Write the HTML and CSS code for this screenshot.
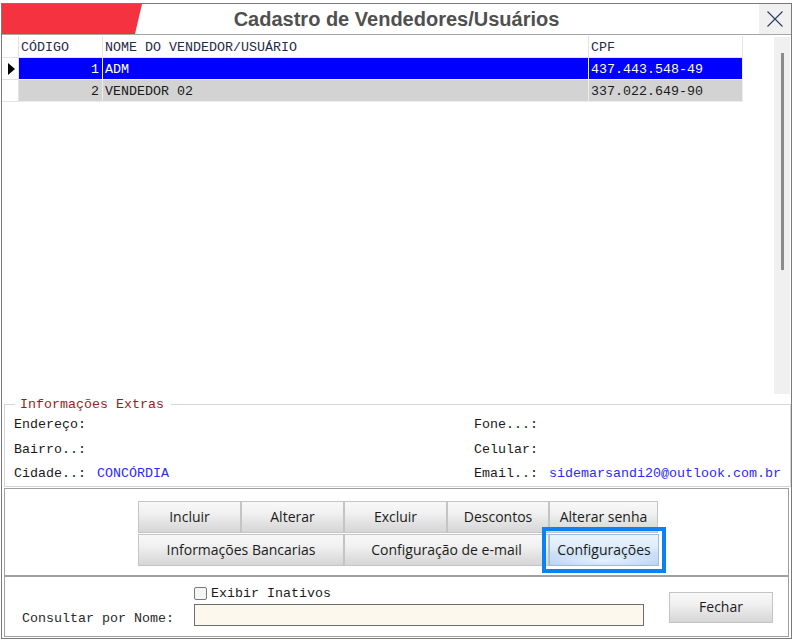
FILE: index.html
```html
<!DOCTYPE html>
<html lang="pt-BR">
<head>
<meta charset="utf-8">
<title>Cadastro de Vendedores/Usuários</title>
<link rel="stylesheet" href="styles.css">
</head>
<body>
<div class="window">
  <header class="titlebar">
    <div class="brand"></div>
    <h1 class="title">Cadastro de Vendedores/Usuários</h1>
    <button class="close" aria-label="Fechar janela">
      <svg width="16" height="16" viewBox="0 0 16 16"><path d="M0.5 0.5 L15.5 15.5 M15.5 0.5 L0.5 15.5" stroke="#2a3a5c" stroke-width="1.1" fill="none"/></svg>
    </button>
  </header>

  <section class="main">
    <div class="grid">
      <div class="row head">
        <div class="cell ind"></div>
        <div class="cell">CÓDIGO</div>
        <div class="cell">NOME DO VENDEDOR/USUÁRIO</div>
        <div class="cell">CPF</div>
      </div>
      <div class="row data sel">
        <div class="cell ind"><span class="arrow"></span></div>
        <div class="cell num">1</div>
        <div class="cell">ADM</div>
        <div class="cell">437.443.548-49</div>
      </div>
      <div class="row data">
        <div class="cell ind"></div>
        <div class="cell num">2</div>
        <div class="cell">VENDEDOR 02</div>
        <div class="cell">337.022.649-90</div>
      </div>
    </div>
    <div class="scroll"><div class="thumb"></div></div>
  </section>

  <section class="extras">
    <fieldset class="group">
      <legend>Informações Extras</legend>
      <div class="info">
        <span>Endereço:</span><span></span><span>Fone...:</span><span></span>
        <span>Bairro..:</span><span></span><span>Celular:</span><span></span>
        <span>Cidade..:</span><span class="val">CONCÓRDIA</span><span>Email..:</span><span class="val">sidemarsandi20@outlook.com.br</span>
      </div>
    </fieldset>
  </section>

  <section class="actions">
    <div class="btn-row">
      <button class="btn w103">Incluir</button>
      <button class="btn w103">Alterar</button>
      <button class="btn w103">Excluir</button>
      <button class="btn w102">Descontos</button>
      <button class="btn w109">Alterar senha</button>
    </div>
    <div class="btn-row">
      <button class="btn w206">Informações Bancarias</button>
      <button class="btn w205">Configuração de e-mail</button>
      <button class="btn w110 focused">Configurações</button>
    </div>
  </section>

  <section class="search">
    <label class="chk-line"><span class="chk"></span>Exibir Inativos</label>
    <span class="search-label">Consultar por Nome:</span>
    <input class="search-input" type="text" aria-label="Consultar por Nome">
    <button class="btn fechar">Fechar</button>
  </section>
</div>
</body>
</html>
```
FILE: styles.css
```css
* { box-sizing: border-box; }
html, body { margin: 0; padding: 0; background: #fff; }
body {
  width: 794px; height: 642px; overflow: hidden;
  font-family: "Liberation Mono", "Courier New", monospace;
  font-size: 13.33px; color: #1a1a1a;
}
.window {
  margin: 3px 0 0 1px;
  width: 791px; height: 636px;
  border: 1px solid #7a7a7a;
  display: flex; flex-direction: column;
  background: #fff;
}

/* title bar */
.titlebar {
  flex: none; height: 31px;
  display: grid; grid-template-columns: 1fr auto 1fr;
  border-bottom: 1px solid #a6a6a6;
}
.brand {
  justify-self: start;
  width: 140px; height: 30px;
  background: #f5323f;
  clip-path: polygon(0 0, 140px 0, 133px 100%, 0 100%);
}
.title {
  margin: 0;
  font: bold 20px "Liberation Sans", Arial, sans-serif;
  line-height: 30px;
  color: #505050;
}
.close {
  justify-self: end;
  width: 32px; height: 30px;
  border: 0; padding: 0;
  background: #f0f0f0;
  display: flex; align-items: center; justify-content: center;
}

/* grid */
.main { flex: none; height: 362px; display: flex; }
.grid { flex: 1; padding-top: 1px; }
.row {
  display: grid;
  grid-template-columns: 17px 84px 486px 154px;
  height: 22px;
}
.cell {
  border-right: 1px solid #e3e3e3;
  border-bottom: 1px solid #e3e3e3;
  padding: 3px 3px 0 2px;
  line-height: 18px;
  white-space: nowrap; overflow: hidden;
}
.head .cell { color: #1e2c48; }
.data .cell { background: #d3d3d3; border-color: #ededed; }
.data .cell.ind { background: #fff; border-color: #e3e3e3; }
.sel .cell { background: #0000ff; color: #fff; }
.cell.num { text-align: right; }
.cell.ind { display: flex; align-items: center; padding: 0 0 0 6px; }
.arrow {
  width: 0; height: 0;
  margin-top: 1px;
  border-top: 6px solid transparent;
  border-bottom: 6px solid transparent;
  border-left: 7px solid #000;
}
.scroll {
  flex: none;
  width: 16px;
  margin: 2px 1px 3px 0;
  background: #f0f0f0;
  padding: 16px 0 0 7px;
}
.thumb { width: 3px; height: 217px; background: #8c8c8c; }

/* extras */
.extras { flex: none; height: 91px; }
.group {
  margin: 0 0 0 2px;
  height: 90px;
  border: 1px solid #d6d6d6;
  padding: 0 0 0 9px;
  min-width: 0;
}
.group legend {
  margin-left: 1px;
  padding: 0 7px 0 5px;
  line-height: 15px;
  color: #9b1c1c;
}
.info {
  display: grid;
  grid-template-columns: 83px 377px 75px 1fr;
  grid-auto-rows: 24.5px;
  align-items: center;
  line-height: 15px;
}
.info span { padding-top: 1px; }
.info .val { color: #2b2bf0; white-space: nowrap; }

/* action buttons */
.actions {
  flex: none; height: 88px;
  margin: 0 2px;
  border: 1px solid #a0a0a0;
  padding: 12px 0 0 133px;
}
.btn-row { display: flex; margin-bottom: 1px; }
.btn {
  height: 32px;
  border: 1px solid #c4c4c4;
  border-radius: 0;
  padding: 0 0 2px;
  background: linear-gradient(#f8f8f8, #f0f0f0 40%, #e4e4e4 65%, #d6d6d6);
  font: 14px "Open Sans", "Noto Sans", sans-serif;
  color: #1c1c1c;
  white-space: nowrap;
}
.w102 { width: 102px; }
.w103 { width: 103px; }
.w109 { width: 109px; }
.w110 { width: 110px; }
.w205 { width: 205px; }
.w206 { width: 206px; }
.btn.focused {
  background:
    radial-gradient(ellipse 60% 35% at 50% 85%, rgba(235,244,253,0.9), rgba(235,244,253,0) 100%),
    linear-gradient(#ecf5fd, #dcebfa 45%, #c3dbf5 70%, #b4d0f0);
  border-color: #9dbde0;
  outline: 4px solid #0b82f4;
  outline-offset: 3px;
  position: relative;
}

/* search */
.search {
  flex: none; height: 61px;
  margin: 0 2px 1px;
  border: 1px solid #a0a0a0;
  padding: 6px 0 0 17px;
  display: grid;
  grid-template-columns: 172px 450px 25px 104px;
  grid-template-rows: 21px 22px;
}
.chk-line {
  grid-column: 2; grid-row: 1;
  display: flex; align-items: center; gap: 4px;
  line-height: 15px;
}
.chk {
  width: 13px; height: 13px;
  border: 1px solid #7a7a7a;
  border-radius: 2px;
  background: #f5f5f5;
}
.search-label {
  grid-column: 1; grid-row: 2;
  align-self: end;
  line-height: 15px;
  color: #2a2a2a;
}
.search-input {
  grid-column: 2; grid-row: 2;
  width: 450px; height: 22px;
  margin: 0;
  border: 1px solid #6e6e6e;
  background: #fdf8ee;
}
.fechar {
  grid-column: 4; grid-row: 1 / 3;
  align-self: start;
  margin-top: 9px;
  width: 104px; height: 31px;
}
```
